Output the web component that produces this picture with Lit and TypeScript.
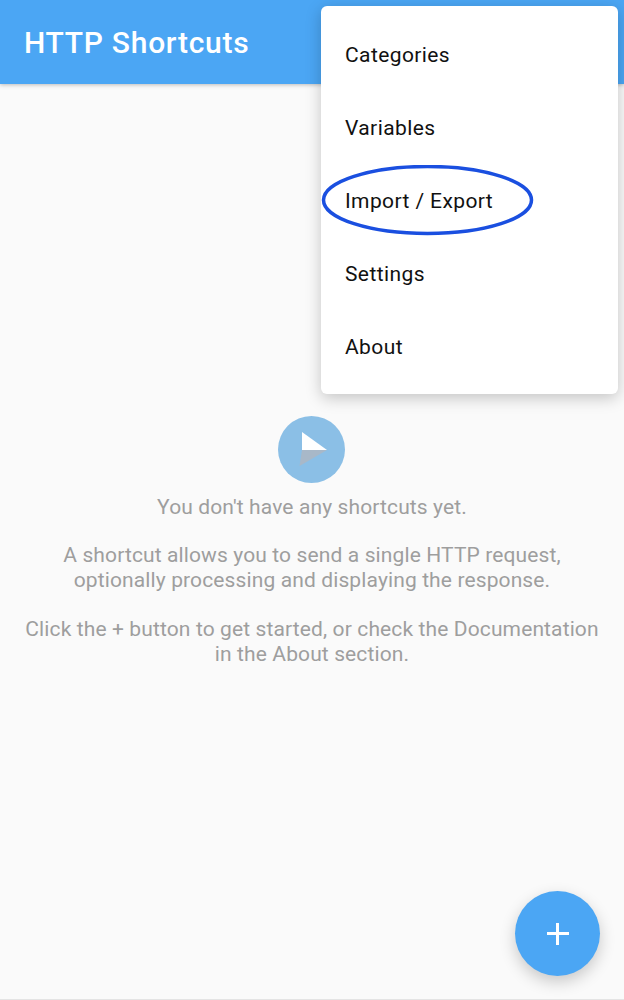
import {css, html, LitElement} from "lit"
import {customElement} from "lit/decorators.js"

const menuItems = ["Categories", "Variables", "Import / Export", "Settings", "About"]

@customElement("app-root")
export class AppRoot extends LitElement {
    static styles = css`
      :host {
        display: block;
        position: relative;
        width: 624px;
        height: 1000px;
        overflow: hidden;
        background: #fafafa;
        font-family: Roboto, "Liberation Sans", sans-serif;
      }

      .toolbar {
        height: 84px;
        box-sizing: border-box;
        padding-left: 24px;
        display: flex;
        align-items: center;
        background: #4ba6f4;
        box-shadow: 0 1px 4px rgba(0, 0, 0, 0.25);
      }

      .toolbar h1 {
        margin: 0;
        font-size: 30px;
        font-weight: 500;
        letter-spacing: 0.72px;
        color: #fff;
      }

      .menu {
        position: absolute;
        top: 6px;
        left: 321px;
        width: 297px;
        height: 388px;
        box-sizing: border-box;
        padding: 13px 0 12px;
        background: #fff;
        border-radius: 6px;
        box-shadow: 0 4px 16px rgba(0, 0, 0, 0.22);
      }

      .menu-item {
        height: 72.8px;
        padding-left: 24px;
        display: flex;
        align-items: center;
        font-size: 21px;
        letter-spacing: 0.4px;
        color: #111;
      }

      .highlight {
        position: absolute;
        top: 165px;
        left: 321px;
      }

      .empty {
        padding-top: 332px;
        display: flex;
        flex-direction: column;
        align-items: center;
        text-align: center;
        font-size: 21px;
        line-height: 25px;
        letter-spacing: 0.12px;
        color: #9e9e9e;
      }

      .empty p {
        margin: 0 0 24.5px;
      }

      .empty p.lead {
        margin-bottom: 22.5px;
      }

      .empty svg {
        margin: 0 1px 12px 0;
      }

      .fab {
        position: absolute;
        left: 515px;
        top: 891px;
        width: 85px;
        height: 85px;
        border-radius: 50%;
        background: #4ba6f4;
        display: flex;
        align-items: center;
        justify-content: center;
        box-shadow: 0 6px 16px rgba(0, 0, 0, 0.2);
      }

      .bottom-line {
        position: absolute;
        left: 0;
        right: 0;
        bottom: 0;
        height: 1px;
        background: #e4e4e4;
      }
    `

    render() {
        return html`
            <header class="toolbar"><h1>HTTP Shortcuts</h1></header>
            <main class="empty">
                <svg width="67" height="67" viewBox="0 0 67 67">
                    <circle cx="33.5" cy="33.5" r="33.5" fill="#8bbfe6"/>
                    <path d="M24 16 L49 34 L24 34 Z" fill="#fff"/>
                    <path d="M24 34 L49 34 L21.5 50 Z" fill="#a8b8c8"/>
                </svg>
                <p class="lead">You don't have any shortcuts yet.</p>
                <p>A shortcut allows you to send a single HTTP request,<br>optionally processing and displaying the response.</p>
                <p>Click the + button to get started, or check the Documentation<br>in the About section.</p>
            </main>
            <nav class="menu">
                ${menuItems.map(item => html`<div class="menu-item">${item}</div>`)}
            </nav>
            <svg class="highlight" width="214" height="72" viewBox="0 0 214 72">
                <ellipse cx="106.5" cy="35" rx="104" ry="33.5" fill="none" stroke="#1a4fe0" stroke-width="3.5"/>
            </svg>
            <div class="fab">
                <svg width="24" height="24" viewBox="0 0 24 24">
                    <path d="M1 11.5 H23 M11.5 1 V23" stroke="#fff" stroke-width="3" fill="none"/>
                </svg>
            </div>
            <div class="bottom-line"></div>
        `
    }
}
